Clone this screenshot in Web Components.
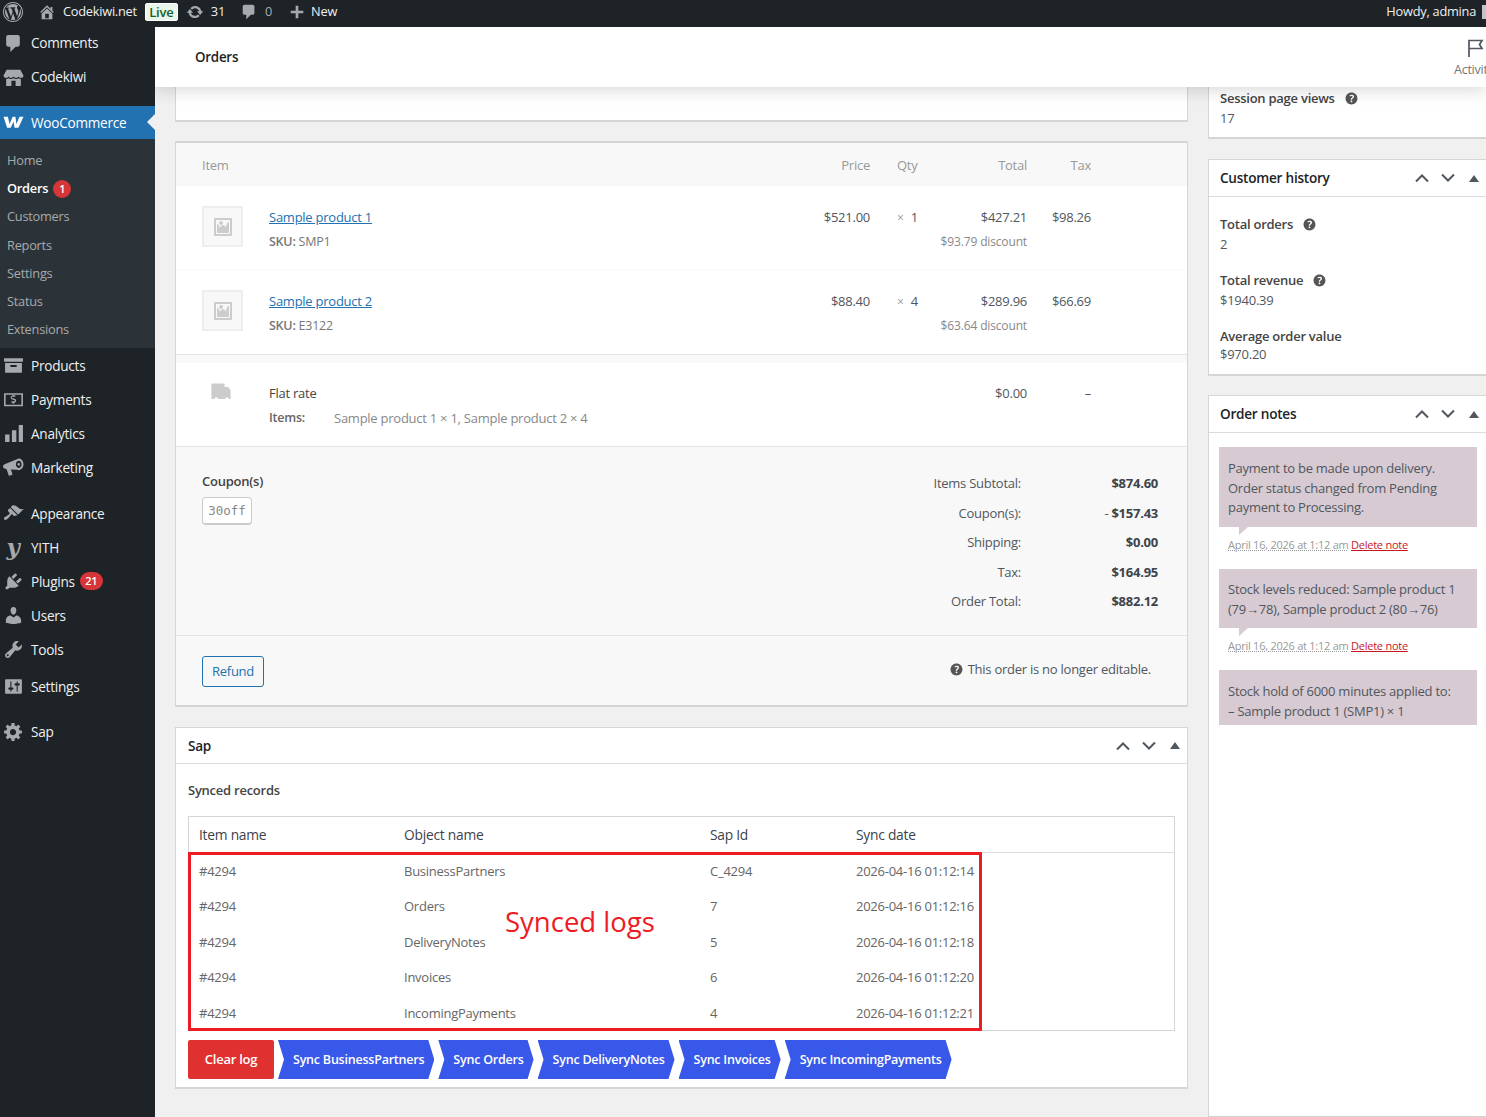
<!DOCTYPE html>
<html lang="en">
<head>
<meta charset="utf-8">
<title>Orders</title>
<style>
  html, body { margin: 0; height: 100%; }
  body {
    width: 1486px;
    height: 1117px;
    overflow: hidden;
    display: flex;
    flex-direction: column;
    background: #f0f0f0;
    color: #50575e;
    font: 13px/1.4 "Open Sans", "Noto Sans", "Liberation Sans", sans-serif;
    letter-spacing: -.25px;
  }
  .layout { display: flex; flex: 1; min-height: 0; }
</style>
</head>
<body>
<admin-bar></admin-bar>
<div class="layout">
  <admin-menu>
    <menu-item icon="comments">Comments</menu-item>
    <menu-item icon="store">Codekiwi</menu-item>
    <menu-item icon="woo" current sep>WooCommerce</menu-item>
    <sub-menu>
      <sub-item>Home</sub-item>
      <sub-item current>Orders <count-badge>1</count-badge></sub-item>
      <sub-item>Customers</sub-item>
      <sub-item>Reports</sub-item>
      <sub-item>Settings</sub-item>
      <sub-item>Status</sub-item>
      <sub-item>Extensions</sub-item>
    </sub-menu>
    <menu-item icon="products">Products</menu-item>
    <menu-item icon="payments">Payments</menu-item>
    <menu-item icon="analytics">Analytics</menu-item>
    <menu-item icon="marketing">Marketing</menu-item>
    <menu-item icon="appearance" sep>Appearance</menu-item>
    <menu-item icon="yith">YITH</menu-item>
    <menu-item icon="plugins">Plugins <count-badge style="margin-left:5px">21</count-badge></menu-item>
    <menu-item icon="users">Users</menu-item>
    <menu-item icon="tools">Tools</menu-item>
    <menu-item icon="settings" style="margin-top:3px">Settings</menu-item>
    <menu-item icon="gear" sep style="margin-top:11px">Sap</menu-item>
  </admin-menu>
  <order-page>
    <meta-box slot="main" clipped style="height:35px;margin-bottom:19px"></meta-box>
    <order-items slot="main"></order-items>
    <meta-box slot="main" heading="Sap" style="margin-top:20px;--box-pad:12px;--head-height:35px">
      <sap-records></sap-records>
    </meta-box>

    <meta-box slot="side" clipped style="height:52px;margin-bottom:20px">
      <stat-line label="Session page views" help value="17" style="padding:1px 0 0"></stat-line>
    </meta-box>
    <meta-box slot="side" heading="Customer history" style="height:217px;margin-bottom:19px">
      <div style="padding-top:17px">
        <stat-line label="Total orders" help value="2"></stat-line>
        <stat-line label="Total revenue" help value="$1940.39"></stat-line>
        <stat-line label="Average order value" value="$970.20" tight></stat-line>
      </div>
    </meta-box>
    <meta-box slot="side" heading="Order notes" style="height:723px">
      <div style="padding-top:14px;margin:0 -2px 0 -1px">
        <order-note date="April 16, 2026 at 1:12 am" style="--note-pad:12px 9px 9px">Payment to be made upon delivery.<br>Order status changed from Pending<br>payment to Processing.</order-note>
        <order-note date="April 16, 2026 at 1:12 am">Stock levels reduced: Sample product 1<br>(79→78), Sample product 2 (80→76)</order-note>
        <order-note style="--note-pad:12.500px 9px 3.500px">Stock hold of 6000 minutes applied to:<br>– Sample product 1 (SMP1) × 1</order-note>
      </div>
    </meta-box>
  </order-page>
</div>

<script>
/**
 * Dashicon style paths, all on a 20x20 box.
 */
const ICONS = {
  wordpress: 'M20 10c0-5.52-4.48-10-10-10S0 4.48 0 10s4.48 10 10 10 10-4.48 10-10zM10 1.01c4.96 0 8.99 4.03 8.99 8.99s-4.03 8.99-8.99 8.99S1.01 14.96 1.01 10 5.04 1.01 10 1.01zM8.01 14.82L4.96 6.61c.49-.03 1.05-.08 1.05-.08.43-.05.38-1.01-.06-.99 0 0-1.29.1-2.13.1-.15 0-.33 0-.52-.01 1.44-2.17 3.9-3.6 6.7-3.6 2.09 0 3.99.79 5.41 2.09-.6-.08-1.45.35-1.45 1.42 0 .66.38 1.22.79 1.88.31.54.5 1.22.5 2.21 0 1.34-1.27 4.48-1.27 4.48l-2.71-7.5c.48-.03.75-.16.75-.16.43-.04.38-1.1-.05-1.08 0 0-1.3.11-2.14.11-.78 0-2.11-.11-2.11-.11-.43-.02-.48 1.06-.05 1.08l.84.08 1.12 3.04zm6.02 2.15L16.64 10s.67-1.69.39-3.81c.63 1.14.94 2.42.94 3.81 0 2.96-1.56 5.58-3.94 6.97zM2.68 6.77L6.5 17.25c-2.67-1.3-4.47-4.08-4.47-7.25 0-1.16.2-2.23.65-3.23zm7.45 4.53l2.29 6.25c-.76.27-1.58.42-2.42.42-.71 0-1.4-.11-2.05-.3z',
  home: 'M16 8.5l1.53 1.53-1.06 1.06L10 4.62l-6.47 6.47-1.06-1.06L10 2.5l4 4v-2h2v4zm-6-2.46l6 5.99V18H4v-5.97zM12 17v-5H8v5h4z',
  update: 'M10.2 3.28c3.53 0 6.43 2.61 6.92 6h2.08l-3.5 4-3.5-4h2.32c-.45-1.97-2.21-3.45-4.32-3.45-1.45 0-2.73.71-3.54 1.78L4.95 5.66C6.23 4.2 8.11 3.28 10.2 3.28zm-.4 13.44c-3.52 0-6.43-2.61-6.92-6H.8l3.5-4c1.17 1.33 2.33 2.67 3.5 4H5.48c.45 1.97 2.21 3.45 4.32 3.45 1.45 0 2.73-.71 3.54-1.78l1.71 1.95c-1.28 1.46-3.15 2.38-5.25 2.38z',
  comments: 'M5 2h9c1.1 0 2 .9 2 2v7c0 1.1-.9 2-2 2h-2l-5 5v-5H5c-1.1 0-2-.9-2-2V4c0-1.1.9-2 2-2z',
  plus: 'M17 8.5v3h-5.5V17h-3v-5.5H3v-3h5.5V3h3v5.5H17z',
  store: 'M3.5 2.5h13l3 5.5c0 1.4-1 2.4-2.4 2.4-1 0-1.9-.6-2.3-1.4-.4.8-1.3 1.4-2.3 1.4s-2-.6-2.5-1.4c-.5.8-1.4 1.4-2.4 1.4S5.700 9.800 5.300 9c-.4.8-1.300 1.400-2.400 1.400C1.500 10.400.5 9.400.5 8zM3 11.400c.9 0 1.700-.3 2.300-.8.7.5 1.500.8 2.400.8s1.700-.3 2.400-.8c.7.500 1.500.8 2.400.8s1.700-.3 2.300-.8c.6.5 1.400.8 2.200.8V18h-5v-5H8v5H3z',
  woo: 'M.5 4.500h4.200l1.500 7 3-7h2.600l1 7 2.900-7h3.800l-4.800 10.500h-3.700l-1-5.600-2.600 5.600H3.900z',
  products: 'M19 3v3.500H1V3zM2 7.500h16V17H2zm5 2v2h6v-2z',
  payments: 'M1 4h18v12.500H1zm1.500 1.500v9.500h15V5.500zM11.800 7.300H9c-.5 0-.8.300-.8.700s.3.700.8.800l2 .5c1 .3 1.500 1 1.500 1.900 0 1-.7 1.700-1.800 1.800v1h-1.400v-1H8v-1.300h2.900c.4 0 .6-.2.600-.5s-.2-.5-.6-.6l-1.900-.5c-1.100-.3-1.700-1-1.700-2s.7-1.800 1.900-1.900v-1h1.400v1h1.200z',
  analytics: 'M2 11h4.200v7H2zm6.500-4h4.200v11H8.500zM15 2h4v16h-4z',
  marketing: 'M15 1.500c2.500 0 4.500 2.400 4.500 5.500s-2 5.500-4.500 5.500c-.5 0-1-.1-1.400-.3L7.500 12l1.600 4.600-3.400 1.400-2.300-6.300-1.900-.7C.6 10.500 0 9.800 0 9s.6-1.500 1.500-2zM15 3.500c-1.500 0-2.700 1.600-2.700 3.500s1.200 3.500 2.700 3.500 2.700-1.600 2.700-3.500-1.200-3.500-2.700-3.500zm0 2.200c.7 0 1.200.6 1.200 1.300s-.5 1.300-1.200 1.300-1.200-.6-1.200-1.300.5-1.300 1.200-1.300z',
  appearance: 'M14.480 11.060L7.410 3.990l1.500-1.500c.5-.56 2.300-.47 3.510.32 1.210.8 1.430 1.280 2.910 2.100 1.180.64 2.450 1.260 4.450.85zm-.71.71L6.700 4.700 4.930 6.470c-.39.39-.39 1.020 0 1.410l1.060 1.060c.39.39.39 1.030 0 1.420-.6.6-1.430 1.110-2.210 1.690-.35.26-.7.53-1.010.84C1.430 13.230.4 14.890 1.300 15.790c.9.9 2.560-.13 3.900-1.470.31-.31.58-.66.85-1.010.57-.78 1.080-1.610 1.690-2.210.39-.39 1.020-.39 1.410 0l1.060 1.060c.39.39 1.020.39 1.410 0z',
  plugins: 'M13.110 4.360L9.870 7.600 8 5.730l3.240-3.240c.35-.34 1.050-.2 1.560.32.52.51.66 1.210.31 1.550zm-8 1.770l.91-1.120 9.010 9.010-1.190.84c-.71.71-2.630 1.160-3.820 1.160H6.140L4.900 17.260c-.59.59-1.540.59-2.120 0-.59-.58-.59-1.530 0-2.120l1.240-1.240v-3.880c0-1.130.4-3.190 1.090-3.890zm7.260 3.970l3.240-3.240c.34-.35 1.040-.21 1.550.31.52.51.66 1.210.31 1.550l-3.240 3.250z',
  users: 'M10 9.250c-2.270 0-2.730-3.440-2.730-3.440C7 4.020 7.820 2 9.970 2c2.160 0 2.980 2.020 2.710 3.810 0 0-.41 3.440-2.680 3.440zm0 2.570L12.720 10c2.390 0 4.520 2.330 4.520 4.530v2.490s-3.650 1.130-7.240 1.130c-3.650 0-7.240-1.130-7.240-1.130v-2.490c0-2.250 1.940-4.480 4.470-4.480z',
  tools: 'M16.680 9.770c-1.340 1.340-3.300 1.670-4.950.99l-5.410 6.520c-.99.99-2.590.99-3.580 0s-.99-2.590 0-3.570l6.520-5.420c-.68-1.650-.35-3.610.99-4.950 1.280-1.280 3.120-1.620 4.720-1.060l-2.890 2.890 2.820 2.820 2.860-2.870c.53 1.580.18 3.390-1.080 4.650zM3.810 16.210c.4.39 1.040.39 1.430 0 .4-.4.4-1.040 0-1.430-.39-.4-1.030-.4-1.430 0-.39.39-.39 1.030 0 1.430z',
  settings: 'M18 16V4c0-.55-.45-1-1-1H3c-.55 0-1 .45-1 1v12c0 .55.45 1 1 1h14c.55 0 1-.45 1-1zM8 11h1c.55 0 1 .45 1 1s-.45 1-1 1H8v1.500c0 .28-.22.5-.5.5s-.5-.22-.5-.5V13H6c-.55 0-1-.45-1-1s.45-1 1-1h1V5.500c0-.28.22-.5.5-.5s.5.22.5.5V11zm5-2h-1c-.55 0-1-.45-1-1s.45-1 1-1h1V5.500c0-.28.22-.5.5-.5s.5.22.5.5V7h1c.55 0 1 .45 1 1s-.45 1-1 1h-1v5.500c0 .28-.22.5-.5.5s-.5-.22-.5-.5V9z',
  gear: 'M18 12h-2.180c-.17.7-.44 1.350-.81 1.930l1.540 1.540-2.100 2.100-1.540-1.540c-.58.36-1.230.63-1.910.79V19H8v-2.180c-.68-.16-1.330-.43-1.910-.79l-1.540 1.540-2.120-2.120 1.540-1.540c-.36-.58-.63-1.230-.79-1.910H1V9.030h2.170c.16-.7.44-1.350.8-1.940L2.430 5.550l2.100-2.100 1.540 1.540c.58-.37 1.240-.64 1.930-.81V2h3v2.180c.68.16 1.330.43 1.910.79l1.540-1.540 2.120 2.120-1.540 1.540c.36.59.64 1.240.8 1.940H18V12zm-8.500 1.500c1.660 0 3-1.340 3-3s-1.340-3-3-3-3 1.340-3 3 1.340 3 3 3z',
  help: 'M17 10c0-3.870-3.140-7-7-7-3.870 0-7 3.130-7 7s3.130 7 7 7c3.860 0 7-3.130 7-7zm-6.300 1.480H9.140v-.43c0-.38.08-.7.24-.98s.46-.57.88-.88c.41-.29.68-.53.81-.71.14-.18.2-.39.2-.62 0-.25-.09-.44-.28-.58-.19-.13-.45-.19-.79-.19-.58 0-1.250.19-2 .57l-.64-1.280c.87-.49 1.800-.74 2.770-.74.81 0 1.450.2 1.920.58.48.39.71.91.71 1.550 0 .43-.09.8-.29 1.110-.19.32-.57.67-1.110 1.060-.38.28-.61.49-.71.63-.1.15-.15.34-.15.57v.35zm-1.470 2.740c-.18-.17-.27-.42-.27-.73 0-.33.08-.58.26-.75s.43-.25.77-.25c.32 0 .57.09.75.26s.27.42.27.74c0 .3-.09.55-.27.72-.18.18-.43.27-.75.27-.33 0-.58-.09-.76-.26z',
  image: 'M2.250 1h15.500c.69 0 1.250.56 1.250 1.250v15.500c0 .69-.56 1.250-1.250 1.250H2.250C1.560 19 1 18.440 1 17.750V2.250C1 1.560 1.560 1 2.250 1zM17 17V3H3v14h14zM10 6c0-1.100-.9-2-2-2s-2 .9-2 2 .9 2 2 2 2-.9 2-2zm3 5s0-6 3-6v10c0 .55-.45 1-1 1H5c-.55 0-1-.45-1-1V7c2 0 3 4 3 4s1-3 3-3 3 3 3 3z',
  truck: 'M2 2h11v3h3l2 2.500V15h-1.500a1.500 1.500 0 0 0-3 0H7.500a1.500 1.500 0 0 0-3 0H2z'
}

/**
 * Returns the markup of an icon.
 *
 * @param {string} name - Key in ICONS.
 * @param {number} size - Width and height in pixels.
 * @returns {string} The svg element as text.
 */
const icon = (name, size = 20) =>
  `<svg width="${size}" height="${size}" viewBox="0 0 20 20" fill="currentColor" aria-hidden="true"><path d="${ICONS[name]}" fill-rule="evenodd"/></svg>`

/**
 * Registers a custom element whose shadow root gets the given markup.
 *
 * @param {string} name - The tag name.
 * @param {string} css - The rules of the shadow root.
 * @param {Function} render - Gets the element, returns the markup.
 */
const define = (name, css, render) => {
  customElements.define(name, class extends HTMLElement {
    connectedCallback () {
      if (this.shadowRoot) return
      this.attachShadow({ mode: 'open' }).innerHTML = `<style>${css}</style>${render(this)}`
    }
  })
}

define('admin-bar', `
  :host { display: flex; flex: none; height: 27px; box-sizing: border-box; padding-bottom: 3px; align-items: center; background: #1d2327; color: #f0f0f1; font-size: 12.800px; position: relative; z-index: 3; }
  span, svg { flex: none; }
  svg { color: #a7aaad; }
  .wp { margin-left: 3px; height: 20px; }
  .live { background: #e9f5ea; color: #11632a; border: 1px solid #fff; border-radius: 2px; width: 31px; height: 16px; line-height: 16px; text-align: center; font-weight: 600; font-size: 13px; margin-left: 8px; }
  .dim { color: #a7aaad; }
  .right { margin-left: auto; margin-right: 6px; }
  .avatar { width: 4px; height: 14px; background: #c3c4c7; }
`, () => `
  <span class="wp">${icon('wordpress', 20)}</span>
  <span style="margin-left:15px;height:18px">${icon('home', 18)}</span>
  <span style="margin-left:7px">Codekiwi.net</span>
  <span class="live">Live</span>
  <span style="margin-left:8px;height:18px">${icon('update', 18)}</span>
  <span style="margin-left:7px">31</span>
  <span style="margin-left:15px;height:18px">${icon('comments', 18)}</span>
  <span class="dim" style="margin-left:7px">0</span>
  <span style="margin-left:16px;height:18px">${icon('plus', 18)}</span>
  <span style="margin-left:5px">New</span>
  <span class="right">Howdy, admina</span>
  <span class="avatar"></span>
`)

define('admin-menu', `
  :host { display: block; flex: none; width: 155px; margin-top: -1px; background: #1d2327; position: relative; z-index: 2; }
`, () => '<slot></slot>')

define('menu-item', `
  :host { display: flex; align-items: center; height: 34px; color: #f0f0f1; font-size: 13.600px; position: relative; }
  :host([sep]) { margin-top: 12px; }
  :host([current]) { background: #2271b1; color: #fff; height: 33px; }
  :host([current]) .ic { color: #fff; }
  .ic { width: 31px; display: flex; justify-content: center; padding-right: 5px; box-sizing: border-box; color: #a7aaad; flex: none; }
  .y { font: italic bold 23px/20px "DejaVu Serif", serif; height: 20px; }
  :host([current])::after { content: ""; position: absolute; right: 0; top: 8px; border: 8.500px solid transparent; border-right-color: #f0f0f0; border-left-width: 0; }
`, (el) => {
  const name = el.getAttribute('icon')
  const glyph = name === 'yith' ? '<span class="y">y</span>' : icon(name, 21)
  return `<span class="ic">${glyph}</span><slot></slot>`
})

define('sub-menu', `
  :host { display: block; background: #2c3338; padding: 8px 0 4px; }
`, () => '<slot></slot>')

define('sub-item', `
  :host { display: flex; align-items: center; gap: 4px; height: 28.170px; padding-left: 7px; color: #a7aaad; font-size: 12.800px; }
  :host([current]) { color: #fff; font-weight: 600; }
`, () => '<slot></slot>')

define('count-badge', `
  :host { display: inline-block; min-width: 7px; height: 18px; padding: 0 5.500px; margin-left: 1px; border-radius: 9px; background: #d63638; color: #fff; font-size: 11px; font-weight: 600; line-height: 18px; text-align: center; vertical-align: 1px; }
`, () => '<slot></slot>')

define('order-page', `
  :host { display: flex; flex-direction: column; flex: 1; min-width: 0; overflow: hidden; }
  header { flex: none; height: 60px; display: flex; align-items: center; justify-content: space-between; padding-left: 40px; background: #fff; box-shadow: 0 3px 16px rgba(0, 0, 0, .16); position: relative; z-index: 1; }
  h1 { margin: 0; font-size: 13.400px; font-weight: 600; color: #1e1e1e; }
  .activity { width: 90px; margin-right: -58px; flex: none; display: flex; flex-direction: column; align-items: flex-start; color: #757575; font-size: 12.500px; margin-top: 2px; }
  .activity svg { color: #50575e; margin-bottom: 3px; margin-left: 11px; }
  .activity span { line-height: 18px; }
  .cols { display: flex; gap: 20px; padding-left: 20px; align-items: flex-start; }
  .main { width: 1013px; flex: none; }
  .side { width: 279px; flex: none; }
`, () => `
  <header>
    <h1>Orders</h1>
    <div class="activity">
      <svg width="20" height="20" viewBox="0 0 20 20" fill="none" stroke="currentColor" stroke-width="1.700"><path d="M4 19V2.500h13l-2.500 4 2.500 4H4"/></svg>
      <span>Activity</span>
    </div>
  </header>
  <div class="cols">
    <div class="main"><slot name="main"></slot></div>
    <div class="side"><slot name="side"></slot></div>
  </div>
`)

define('meta-box', `
  :host { display: block; box-sizing: border-box; background: #fff; border: 1px solid #d5d5d5; border-bottom-width: 2px; }
  :host([clipped]) { border-top: 0; }
  .head { display: flex; align-items: center; height: var(--head-height, 36px); padding-left: var(--box-pad, 11px); border-bottom: 1px solid #dcdcde; }
  h2 { flex: 1; margin: 0; font-size: 13.600px; font-weight: 600; color: #1d2327; }
  .handles { display: flex; align-items: center; color: #50575e; flex: none; margin-right: -1px; }
  .handles span { width: 26px; height: 20px; display: flex; justify-content: center; align-items: center; }
  .body { padding: 0 var(--box-pad, 11px); }
`, (el) => {
  const title = el.getAttribute('heading')
  const head = !title
    ? ''
    : `<div class="head"><h2>${title}</h2><div class="handles">
        <span><svg width="16" height="10" viewBox="0 0 16 10" fill="none" stroke="currentColor" stroke-width="2"><path d="M2 8.500l6-6 6 6"/></svg></span>
        <span><svg width="16" height="10" viewBox="0 0 16 10" fill="none" stroke="currentColor" stroke-width="2"><path d="M2 1.500l6 6 6-6"/></svg></span>
        <span><svg width="10" height="7" viewBox="0 0 10 7" fill="currentColor"><path d="M5 0l5 7H0z"/></svg></span>
      </div></div>`
  return `${head}<div class="body"><slot></slot></div>`
})

define('stat-line', `
  :host { display: block; padding-bottom: 16px; }
  :host([tight]) .value { margin-top: -2px; }
  .label { display: flex; align-items: center; gap: 8px; height: 20px; font-weight: 600; color: #444; }
  .label svg { color: #555; }
  .value { height: 20px; line-height: 20px; }
`, (el) => `
  <div class="label">${el.getAttribute('label')}${el.hasAttribute('help') ? icon('help', 17) : ''}</div>
  <div class="value">${el.getAttribute('value')}</div>
`)

define('order-note', `
  :host { display: block; margin-bottom: 15px; }
  .text { background: #d7cad2; padding: var(--note-pad, 11px 9px 8px); line-height: 19.700px; color: #50575e; }
  .tail { width: 0; height: 0; margin-left: 20px; border-top: 8px solid #d7cad2; border-right: 9px solid transparent; }
  .meta { margin: 1px 0 0 9px; font-size: 11px; line-height: 18px; color: #999; white-space: nowrap; }
  .meta abbr { text-decoration: underline dotted #999; }
  .meta a { color: #c9171e; text-decoration: underline; }
`, (el) => {
  const date = el.getAttribute('date')
  const meta = !date
    ? ''
    : `<div class="tail"></div><div class="meta"><abbr>${date}</abbr> <a>Delete note</a></div>`
  return `<div class="text"><slot></slot></div>${meta}`
})

define('product-thumb', `
  :host { display: flex; width: 41px; height: 41px; box-sizing: border-box; margin-top: 1px; background: #f8f8f8; border: 2px solid #eee; align-items: center; justify-content: center; color: #ccc; }
`, () => icon('image', 20))

define('order-items', `
  :host { display: block; background: #fff; border: 1px solid #d5d5d5; border-bottom-width: 2px; border-top-width: 2px; height: 566px; box-sizing: border-box; }
  .row { display: grid; grid-template-columns: 67px 1fr 70px 47px 110px 64px; padding: 0 96px 0 26px; }
  .head { background: #f8f8f8; height: 43px; line-height: 44px; color: #999; }
  .num { text-align: right; }
  .qty { padding-left: 27px; white-space: nowrap; }
  .qty small { color: #999; font-size: 12px; margin-right: 4px; }
  .item { height: 84px; padding-top: 19px; box-sizing: border-box; border-bottom: 1px solid #f8f8f8; line-height: 24px; }
  .item a { color: #2271b1; text-decoration: underline; }
  .item.last { border-bottom-color: #e5e5e5; height: 85px; }
  .sub { color: #888; font-size: 12px; letter-spacing: -.15px; margin-top: 1px; }
  .sku { color: #777; font-size: 12.500px; margin-top: 1px; }
  .strip { height: 8px; background: #f8f8f8; }
  .ship { height: 84px; padding-top: 18px; box-sizing: border-box; line-height: 24px; border-bottom: 1px solid #e5e5e5; }
  .ship svg { color: #ccc; margin-left: 7px; }
  .ship .name { color: #444; }
  .ship .meta { display: flex; margin-top: 1px; color: #888; }
  .ship b { width: 65px; font-size: 12.500px; font-weight: 600; color: #666; }
  .totals { display: flex; justify-content: space-between; height: 189px; box-sizing: border-box; padding: 24px 29px 0 26px; background: #f8f8f8; border-bottom: 1px solid #e5e5e5; }
  .coupon-title { font-weight: 600; color: #444; line-height: 20px; }
  .coupon { display: block; width: 50px; height: 28px; box-sizing: border-box; margin-top: 6px; background: #fff; border: 1px solid #ccc; border-bottom-width: 2px; border-radius: 4px; color: #888; font: 12.500px/25px "DejaVu Sans Mono", monospace; letter-spacing: 0; text-align: center; }
  .sums { display: grid; grid-template-columns: auto 137px; grid-auto-rows: 29.600px; margin-top: 3px; text-align: right; }
  .sums b { font-weight: 700; color: #3c434a; }
  .foot { display: flex; justify-content: space-between; align-items: center; height: 69px; box-sizing: border-box; padding: 0 36px 0 26px; background: #f8f8f8; }
  .refund { width: 62px; height: 31px; box-sizing: border-box; border: 1px solid #2271b1; border-radius: 3px; background: #f6f7f7; color: #2271b1; font: inherit; letter-spacing: inherit; padding: 0; margin-top: 2px; }
  .locked { display: flex; align-items: center; gap: 3px; margin-top: -2px; }
  .locked svg { color: #555; }
`, () => {
  const item = (title, sku, price, qty, total, discount, tax, last) => `
    <div class="row item${last ? ' last' : ''}">
      <product-thumb></product-thumb>
      <div><a>${title}</a><div class="sku"><span style="font-weight:600">SKU:</span> ${sku}</div></div>
      <div class="num">${price}</div>
      <div class="qty"><small>×</small> ${qty}</div>
      <div class="num">${total}<div class="sub">${discount} discount</div></div>
      <div class="num">${tax}</div>
    </div>`
  return `
    <div class="row head"><div>Item</div><div></div><div class="num">Price</div><div class="qty">Qty</div><div class="num">Total</div><div class="num">Tax</div></div>
    ${item('Sample product 1', 'SMP1', '$521.00', 1, '$427.21', '$93.79', '$98.26')}
    ${item('Sample product 2', 'E3122', '$88.40', 4, '$289.96', '$63.64', '$66.69', true)}
    <div class="strip"></div>
    <div class="row ship">
      <div>${icon('truck', 24)}</div>
      <div><div class="name">Flat rate</div><div class="meta"><b>Items:</b><span>Sample product 1 × 1, Sample product 2 × 4</span></div></div>
      <div></div><div></div>
      <div class="num">$0.00</div>
      <div class="num">–</div>
    </div>
    <div class="totals">
      <div><div class="coupon-title">Coupon(s)</div><code class="coupon">30off</code></div>
      <div class="sums">
        <span>Items Subtotal:</span><b>$874.60</b>
        <span>Coupon(s):</span><span>- <b>$157.43</b></span>
        <span>Shipping:</span><b>$0.00</b>
        <span>Tax:</span><b>$164.95</b>
        <span>Order Total:</span><b>$882.12</b>
      </div>
    </div>
    <div class="foot">
      <button class="refund">Refund</button>
      <span class="locked">${icon('help', 17)}This order is no longer editable.</span>
    </div>`
})

define('sap-records', `
  :host { display: block; padding: 16px 0 8px; }
  h3 { margin: 0 0 16px; height: 20px; line-height: 20px; font-size: 13px; font-weight: 600; color: #444; }
  .table { border: 1px solid #d5d5d5; position: relative; height: 215px; box-sizing: border-box; }
  .row { display: grid; grid-template-columns: 205px 306px 146px 1fr; padding-left: 10px; height: 35.400px; line-height: 35.400px; color: #666; }
  .row.head { height: 36px; line-height: 36px; box-sizing: border-box; font-size: 13.800px; color: #3c434a; border-bottom: 1px solid #dcdcde; margin-bottom: 1px; }
  .mark { position: absolute; left: -1px; top: 35px; width: 794px; height: 179px; box-sizing: border-box; border: 3px solid #ed1c24; }
  .mark span { position: absolute; left: 314px; top: 49px; font-size: 27.500px; line-height: 36px; letter-spacing: 0; color: #ed1c24; white-space: nowrap; }
  .actions { display: flex; gap: 4px; margin-top: 9px; }
  .clear { display: flex; align-items: center; justify-content: center; width: 86px; height: 39px; border-radius: 2px; background: #e03131; color: #fff; font-weight: 600; }
  .sync { height: 39px; line-height: 39px; padding: 0 10px 0 15px; background: #3858e9; color: #fff; font-weight: 600; font-size: 12.500px; letter-spacing: -.22px; white-space: nowrap; clip-path: polygon(0 0, calc(100% - 6px) 0, 100% 50%, calc(100% - 6px) 100%, 0 100%, 6px 50%); }
`, () => {
  const rows = [
    ['BusinessPartners', 'C_4294', '2026-04-16 01:12:14'],
    ['Orders', '7', '2026-04-16 01:12:16'],
    ['DeliveryNotes', '5', '2026-04-16 01:12:18'],
    ['Invoices', '6', '2026-04-16 01:12:20'],
    ['IncomingPayments', '4', '2026-04-16 01:12:21']
  ]
  const body = rows.map(([object, id, date]) =>
    `<div class="row"><span>#4294</span><span>${object}</span><span>${id}</span><span>${date}</span></div>`).join('')
  const sync = rows.map(([object]) => `<span class="sync">Sync ${object}</span>`).join('')
  return `
    <h3>Synced records</h3>
    <div class="table">
      <div class="row head"><span>Item name</span><span>Object name</span><span>Sap Id</span><span>Sync date</span></div>
      ${body}
      <div class="mark"><span>Synced logs</span></div>
    </div>
    <div class="actions"><span class="clear">Clear log</span>${sync}</div>`
})
</script>
</body>
</html>
